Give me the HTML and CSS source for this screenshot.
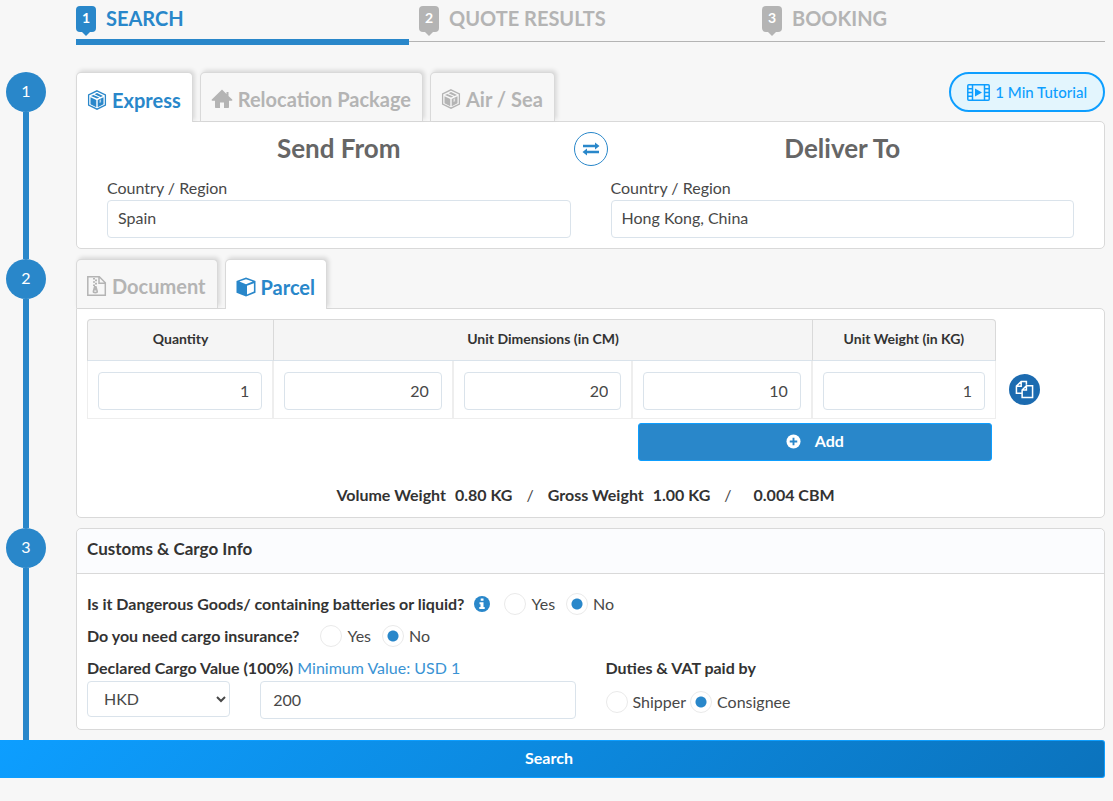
FILE: index.html
```html
<!DOCTYPE html>
<html lang="en">
<head>
<meta charset="utf-8">
<title>Shipping Search</title>
<link rel="stylesheet" href="styles.css">
</head>
<body>
<svg width="0" height="0" class="sprite" aria-hidden="true">
  <symbol id="box" viewBox="0 0 20 20">
    <path d="M10 .8 18.400 5v10L10 19.200 1.600 15V5z" fill="none" stroke="currentColor" stroke-width="1.300"/>
    <path d="M3.500 7.300 9.300 10v7.200L3.500 14.300zM16.500 7.300l-5.800 2.700v7.200l5.800-2.900z" fill="currentColor"/>
    <path d="M4 6 6.300 4.900l6 2.600L10 8.600zM7.600 4.200 10 3l6 2.900-2.400 1.200z" fill="currentColor"/>
    <path d="M12.500 10v3l1.600-.8V9.300z" fill="#fff" opacity=".6"/>
  </symbol>
</svg>

<nav class="steps" aria-label="Progress">
  <div class="step active"><span class="badge">1</span>SEARCH</div>
  <div class="step"><span class="badge">2</span>QUOTE RESULTS</div>
  <div class="step"><span class="badge">3</span>BOOKING</div>
</nav>

<form class="quote">
  <section class="stage">
    <div class="rail"><span class="dot">1</span></div>
    <div class="content">
      <div class="tabbar">
        <div class="tabs">
          <button type="button" class="tab current"><svg class="ico"><use href="#box"/></svg>Express</button>
          <button type="button" class="tab"><svg class="ico wide" viewBox="0 0 22 20"><path d="M11 .5.800 10.500c-.5.700-.2 1.200.500 1.200H4V18c0 .7.400 1 1 1h4v-5.500h4V19h4c.6 0 1-.300 1-1v-6.300h2.700c.7 0 1-.500.500-1.200L17.500 7V3h-2v2z" fill="currentColor"/></svg>Relocation Package</button>
          <button type="button" class="tab"><svg class="ico"><use href="#box"/></svg>Air / Sea</button>
        </div>
        <button type="button" class="tutorial"><svg class="film" viewBox="0 0 23 17"><rect x=".8" y=".8" width="21.400" height="15.400" rx="1" fill="none" stroke="currentColor" stroke-width="1.500"/><path d="M5.500 1v15M17.500 1v15M1 4.700h4M1 8.500h4M1 12.300h4M18 4.700h4M18 8.500h4M18 12.300h4" stroke="currentColor" stroke-width="1.500"/><path d="M8 4.500v8l7-4z" fill="currentColor"/></svg>1 Min Tutorial</button>
      </div>
      <div class="panel route">
        <h2>Send From</h2>
        <button type="button" class="swap" aria-label="Swap"><svg viewBox="0 0 18 14"><path d="M1 2.800h12V.6l4.500 3.400L13 7.400V5.200H1zM17 8.800H5V6.600L.5 10 5 13.400v-2.200h12z" fill="currentColor"/></svg></button>
        <h2>Deliver To</h2>
        <div class="field from"><label for="from">Country / Region</label><input id="from" type="text" value="Spain"></div>
        <div class="field to"><label for="to">Country / Region</label><input id="to" type="text" value="Hong Kong, China"></div>
      </div>
    </div>
  </section>

  <section class="stage">
    <div class="rail"><span class="dot">2</span></div>
    <div class="content">
      <div class="tabs">
        <button type="button" class="tab"><svg class="ico" viewBox="0 0 20 20"><path d="M.8.800h11.500l6 6v12.400H.8zM12 1v6.200h6" fill="none" stroke="currentColor" stroke-width="1.500"/><path d="M6 2h2v1.600H6zM8 3.600h2v1.600H8zM6 5.200h2v1.600H6zM8 6.800h2v1.600H8zM6 8.400h2V10H6zM7 10h2.500l1.500 5.200c.3 1.300-1 2.300-2.700 2.300s-3-1-2.700-2.300zm.3 4.500v1.300h2v-1.300z" fill="currentColor" fill-rule="evenodd"/></svg>Document</button>
        <button type="button" class="tab current"><svg class="ico" viewBox="0 0 20 20"><path d="M10 .5 19.500 4v11.700L10 19.500.5 15.700V4z" fill="currentColor"/><path d="M10 2.200 16.700 4.600 10 7.200 3.300 4.600zM17.900 6.200v8.400L11 17.500V8.800z" fill="#fff"/></svg>Parcel</button>
      </div>
      <div class="panel cargo">
        <table>
          <colgroup><col class="c-qty"><col class="c-dim"><col class="c-dim"><col class="c-dim"><col class="c-wt"></colgroup>
          <thead><tr><th>Quantity</th><th colspan="3">Unit Dimensions (in CM)</th><th>Unit Weight (in KG)</th></tr></thead>
          <tbody><tr>
            <td><input type="text" aria-label="Quantity" value="1"></td>
            <td><input type="text" aria-label="Length" value="20"></td>
            <td><input type="text" aria-label="Width" value="20"></td>
            <td><input type="text" aria-label="Height" value="10"></td>
            <td><input type="text" aria-label="Unit weight" value="1"></td>
          </tr></tbody>
        </table>
        <button type="button" class="copy" aria-label="Copy row"><svg viewBox="0 0 20 20"><path d="M12 5V1.500H6.500l-5 5V14h6M6.500 1.500v5h-5M12 6h6.500v12.500h-11v-8zM12 6v4.500H7.500" fill="none" stroke="currentColor" stroke-width="1.600"/></svg></button>
        <button type="button" class="add"><svg viewBox="0 0 16 16"><circle cx="8" cy="8" r="7.500" fill="currentColor"/><path d="M8 4v8M4 8h8" stroke="#2987ca" stroke-width="2"/></svg>Add</button>
        <p class="totals"><b>Volume Weight</b><b>0.80 KG</b><span>/</span><b>Gross Weight</b><b>1.00 KG</b><span>/</span><b>0.004 CBM</b></p>
      </div>
    </div>
  </section>

  <section class="stage">
    <div class="rail"><span class="dot">3</span></div>
    <div class="content">
      <div class="card">
        <h3>Customs &amp; Cargo Info</h3>
        <div class="card-body">
          <div class="ask" role="radiogroup" aria-labelledby="q1"><b id="q1">Is it Dangerous Goods/ containing batteries or liquid?</b><svg class="info" viewBox="0 0 16 16"><circle cx="8" cy="8" r="8" fill="currentColor"/><path d="M6.700 2.500h2.800v2.300H6.700zM5.500 6.300h4v4.700h1.200v2H5.300v-2h1.200V8.200h-1z" fill="#fff"/></svg>
            <label><input type="radio" name="dg">Yes</label><label><input type="radio" name="dg" checked>No</label></div>
          <div class="ask" role="radiogroup" aria-labelledby="q2"><b id="q2">Do you need cargo insurance?</b>
            <label><input type="radio" name="ins">Yes</label><label><input type="radio" name="ins" checked>No</label></div>
          <div class="halves">
            <div>
              <div class="caption"><label for="value"><b>Declared Cargo Value (100%)</b></label> <span class="hint">Minimum Value: USD 1</span></div>
              <div class="money">
                <select aria-label="Currency"><option>HKD</option></select>
                <input id="value" type="text" value="200">
              </div>
            </div>
            <div>
              <div class="caption"><b id="q3">Duties &amp; VAT paid by</b></div>
              <div class="payer" role="radiogroup" aria-labelledby="q3"><label><input type="radio" name="duty">Shipper</label><label><input type="radio" name="duty" checked>Consignee</label></div>
            </div>
          </div>
        </div>
      </div>
    </div>
  </section>
  <button type="submit" class="search">Search</button>
</form>
</body>
</html>
```
FILE: styles.css
```css
* { box-sizing: border-box; }

body {
  margin: 0;
  padding-right: 8px;
  background: #f7f7f7;
  color: #484848;
  font: 16px/24px Lato, "Open Sans", sans-serif;
}

button, input, select { font: inherit; color: inherit; margin: 0; }
button { cursor: pointer; }
h2, h3, p { margin: 0; }
b, h3, th { color: #333; font-weight: 700; }
.sprite { position: absolute; }

/* Progress steps */
.steps {
  display: grid;
  grid-template-columns: repeat(3, 1fr);
  margin-left: 76px;
  height: 45px;
  background: linear-gradient(#b4b4b4, #b4b4b4) 0 41px / 100% 1px no-repeat;
}
.step {
  display: flex;
  align-items: flex-start;
  gap: 10px;
  padding-top: 6px;
  color: #b4b4b4;
  font-size: 20px;
  font-weight: 700;
}
.step.active { color: #2987ca; border-bottom: 6px solid #2987ca; margin-right: 10px; }
.badge {
  position: relative;
  width: 20px;
  height: 26px;
  border-radius: 4px;
  background: #b4b4b4;
  color: #fff;
  font-size: 14px;
  line-height: 24px;
  text-align: center;
}
.badge::after {
  content: "";
  position: absolute;
  left: 6px;
  top: 100%;
  border: 4px solid transparent;
  border-top-color: #b4b4b4;
  border-bottom: 0;
}
.active .badge { background: #2987ca; }
.active .badge::after { border-top-color: #2987ca; }

/* Numbered stages */
.quote { padding-top: 27px; }
.stage { display: grid; grid-template-columns: 76px minmax(0, 1fr); }
.content { padding-bottom: 10px; }
.rail { display: flex; flex-direction: column; align-items: center; width: 52px; }
.rail::after { content: ""; flex: 1; width: 6px; background: #2987ca; }
.dot {
  width: 40px;
  height: 40px;
  border-radius: 50%;
  background: #2987ca;
  color: #fff;
  line-height: 38px;
  text-align: center;
}

/* Tabs */
.tabbar { display: flex; justify-content: space-between; align-items: flex-start; }
.tabs { display: flex; gap: 7px; }
.tab {
  display: flex;
  align-items: center;
  gap: 5px;
  height: 49px;
  padding: 4px 11px 0 10px;
  border: 1px solid #d9d9d9;
  border-bottom: 0;
  border-radius: 5px 5px 0 0;
  background: #f7f7f7;
  box-shadow: 2px -2px 4px rgba(0, 0, 0, .12);
  color: #b4b4b4;
  font-size: 20px;
  font-weight: 700;
  white-space: nowrap;
}
.tab.current { position: relative; height: 50px; margin-bottom: -1px; background: #fff; color: #2987ca; clip-path: inset(-8px -8px 0 -8px); }
.ico { width: 20px; height: 20px; }
.ico.wide { width: 22px; }
.tutorial {
  display: flex;
  align-items: center;
  gap: 5px;
  height: 40px;
  padding: 0 16px;
  border: 2px solid #0d9eff;
  border-radius: 20px;
  background: #e3f5fd;
  color: #0d9eff;
  font-size: 15px;
  font-weight: 500;
}
.film { width: 23px; height: 17px; }

/* Panels */
.panel, .card { border: 1px solid #d9d9d9; background: #fff; border-radius: 5px; }
.panel { border-top-left-radius: 0; }
.route {
  display: grid;
  grid-template-columns: 1fr 40px 1fr;
  align-items: center;
  justify-items: center;
  padding: 10px 30px;
  row-gap: 10px;
}
h2 { padding-bottom: 2px; color: #666; font-size: 26px; line-height: 32px; }
.swap {
  display: flex;
  align-items: center;
  justify-content: center;
  width: 34px;
  height: 34px;
  padding: 0;
  border: 1px solid #2987ca;
  border-radius: 50%;
  background: #fff;
  color: #2987ca;
}
.swap svg { width: 18px; height: 14px; }
.field { width: 100%; }
.field label { display: block; }
.to { grid-column: 3; }
input[type="text"] {
  display: block;
  width: 100%;
  height: 38px;
  padding: 0 10px 4px;
  border: 1px solid #dae3eb;
  border-radius: 4px;
  background: #fff;
}

/* Cargo lines */
.cargo {
  display: grid;
  grid-template-columns: minmax(0, 1fr) 85px;
  column-gap: 13px;
  padding: 10px;
}
table { width: 100%; table-layout: fixed; border-collapse: separate; border-spacing: 0; }
.c-qty { width: 20.6%; }
.c-dim { width: 19.75%; }
th {
  height: 42px;
  padding: 0 0 2px;
  border: 1px solid #d9d9d9;
  border-left-width: 0;
  border-bottom-color: #dae3eb;
  background: #f5f5f5;
  font-size: 14px;
}
th:first-child { border-left-width: 1px; border-top-left-radius: 4px; }
th:last-child { border-top-right-radius: 4px; }
td { padding: 11px 10px 8px; border: solid #eee; border-width: 0 2px 1px 0; }
td:first-child { border-left-width: 1px; }
td:last-child { border-right-width: 1px; }
td input[type="text"] { padding: 0 12px 2px 10px; text-align: right; }
.copy {
  display: flex;
  align-items: center;
  justify-content: center;
  align-self: end;
  width: 31px;
  height: 31px;
  margin-bottom: 14px;
  padding: 0;
  border: 0;
  border-radius: 50%;
  background: #1c6bb0;
  color: #fff;
}
.copy svg { width: 19px; height: 19px; }
.add {
  display: flex;
  align-items: center;
  justify-content: center;
  gap: 14px;
  justify-self: end;
  width: 39%;
  height: 38px;
  margin: 4px 4px 0 0;
  padding: 0 0 2px;
  border: 1px solid #0d9eff;
  border-radius: 3px;
  background: #2987ca;
  color: #fff;
  font-weight: 700;
}
.add svg { width: 15px; height: 15px; }
.totals {
  grid-column: 1 / -1;
  display: flex;
  justify-content: center;
  gap: 9px;
  padding: 22px 10px 0 0;
}
.totals span { padding: 0 5px; }
.totals b:last-child { padding-left: 8px; }

/* Customs */
h3 {
  padding: 8px 10px 12px;
  border-bottom: 1px solid #d9d9d9;
  border-radius: 5px 5px 0 0;
  background: #fbfcfe;
  font-size: 17px;
}
.card-body { padding: 14px 10px 10px; }
.ask { display: flex; align-items: center; height: 32px; }
.ask b { margin-right: 10px; }
.ask label { margin-left: 11px; }
.info { width: 16px; height: 16px; margin-right: 3px; color: #2987ca; }
.ask label, .payer label { display: flex; align-items: center; gap: 5px; }
input[type="radio"] {
  appearance: none;
  width: 22px;
  height: 22px;
  border: 1px solid #eaeaea;
  border-radius: 50%;
  background: #fff;
}
input[type="radio"]:checked { background: radial-gradient(circle, #2987ca 5px, #fff 6px); }
.halves { display: grid; grid-template-columns: 1fr 1fr; gap: 30px; padding-top: 4px; }
.caption { padding-bottom: 1px; }
.hint { color: #3a93d4; }
.money { display: grid; grid-template-columns: 5fr 11fr; gap: 30px; align-items: start; }
.money input[type="text"] { padding: 0 12px 2px; }
select {
  width: 100%;
  height: 36px;
  padding: 0 0 2px 12px;
  border: 1px solid #dae3eb;
  border-radius: 4px;
  background: #fff;
}
.payer { display: flex; gap: 4px; padding-top: 9px; }

.search {
  display: block;
  width: 100%;
  height: 38px;
  padding: 0 6px 2px 0;
  border: 1px solid #0d9eff;
  border-width: 1px 1px 1px 0;
  border-radius: 0 3px 3px 0;
  background: linear-gradient(135deg, #0d9eff, #0b73bd);
  color: #fff;
  font-weight: 700;
}
```
